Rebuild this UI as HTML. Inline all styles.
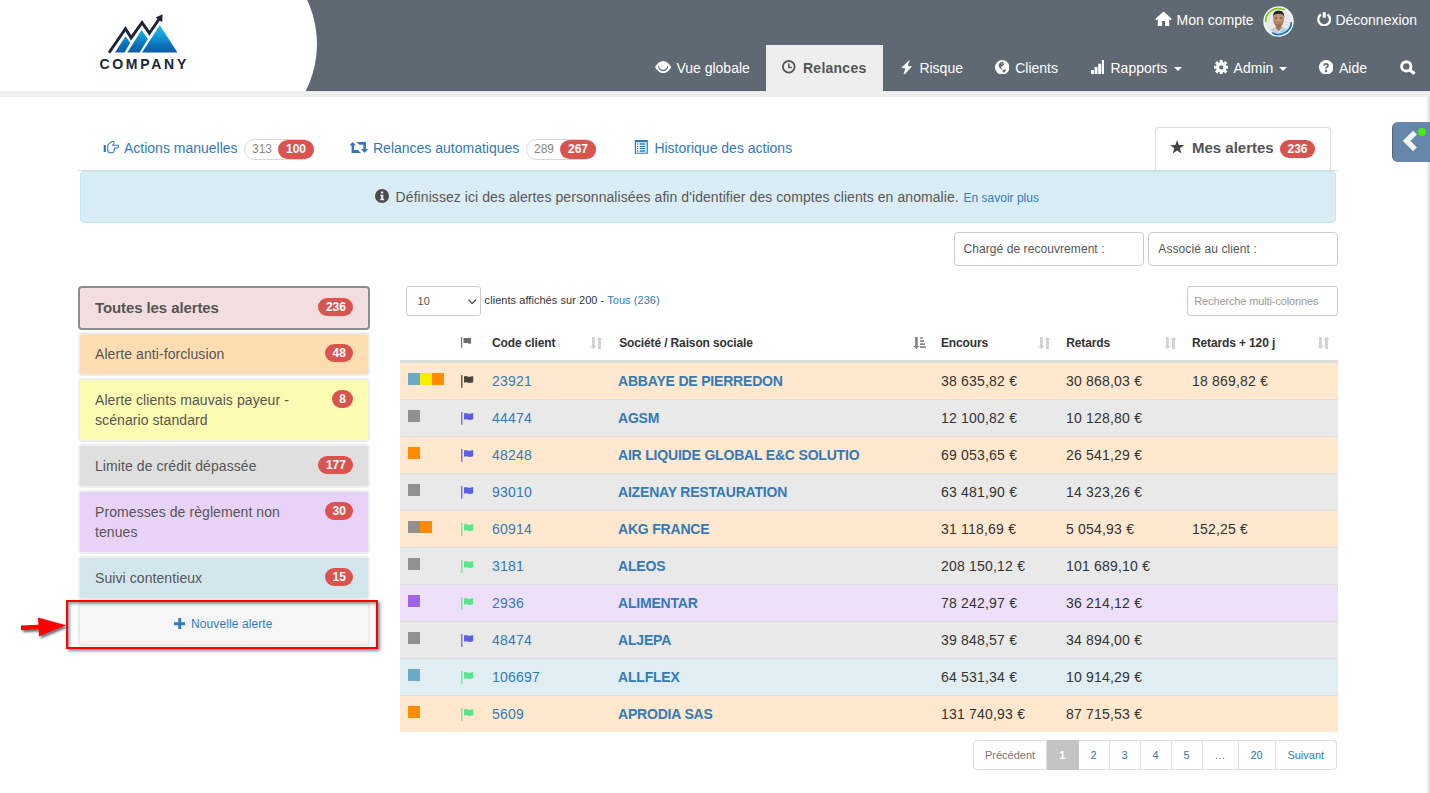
<!DOCTYPE html>
<html lang="fr">
<head>
<meta charset="utf-8">
<title>Relances - Mes alertes</title>
<style>
*{box-sizing:border-box;margin:0;padding:0}
html,body{width:1430px;height:793px;overflow:hidden;background:#fff}
body{font-family:"Liberation Sans",sans-serif;font-size:14px;line-height:20px;color:#333;position:relative}
a{color:#337ab7;text-decoration:none}
.abs{position:absolute}
svg{display:block}
/* ---------- header ---------- */
#hdr{position:absolute;left:0;top:0;width:1430px;height:91px;background:#5f6973;overflow:hidden}
#hdr .logo-bg{position:absolute;left:-100px;top:-59.5px;width:416.7px;height:206.8px;background:#fff;border-radius:0 103.4px 103.4px 0}
#stripe{position:absolute;left:0;top:91px;width:1430px;height:6px;background:#eee}
#edge{position:absolute;left:1426px;top:97px;width:4px;height:696px;background:linear-gradient(to right,rgba(255,255,255,0),#e9e9e9 60%,#dcdcdc)}
.top{position:absolute;top:10px;height:20px;line-height:20px;color:#fff;font-size:14px;white-space:nowrap}
.nav{position:absolute;top:58px;height:20px;line-height:20px;color:#fff;font-size:14px;white-space:nowrap}
.ico{position:absolute}
#tab-act{position:absolute;left:766px;top:45px;width:117px;height:46px;background:#eee}
#tab-act span{position:absolute;left:37px;top:13px;font-weight:bold;color:#555;font-size:14px;letter-spacing:.25px}
.caret{position:absolute;width:0;height:0;border-left:4px solid transparent;border-right:4px solid transparent;border-top:4px solid #fff}

/* ---------- tabs ---------- */
.tab{position:absolute;top:138px;height:20px;line-height:20px;font-size:14px;color:#337ab7;white-space:nowrap}
.pill{position:absolute;top:139px;height:21px;border:1px solid #d8d8d8;border-radius:10.5px;background:#fff;font-size:12px;line-height:19px;color:#888;white-space:nowrap}
.pill .n{position:absolute;left:7px;top:0}
.badge{display:block;position:absolute;height:18px;line-height:18px;padding:0 7.5px;border-radius:9px;background:#d9534f;color:#fff;font-size:12px;font-weight:bold;white-space:nowrap;text-align:center}
#tabline{position:absolute;left:78px;top:170px;width:1260px;height:1px;background:#ddd}
#tab-mes{position:absolute;left:1155px;top:127px;width:176px;height:43px;border:1px solid #ddd;border-bottom:0;border-radius:4px 4px 0 0;background:#fff}
#tab-mes .t{position:absolute;left:36px;top:10px;font-size:15px;font-weight:bold;color:#555;white-space:nowrap}
#info{position:absolute;left:80px;top:171px;width:1256px;height:52px;background:#d9edf7;border:1px solid #bce8f1;border-radius:4px}
#info .t{position:absolute;left:314.6px;top:15px;font-size:14px;color:#5a5754;letter-spacing:.07px;white-space:nowrap}
#info .l{position:absolute;left:882.6px;top:16px;font-size:12px;color:#337ab7;white-space:nowrap}
.filt{position:absolute;top:232px;height:34px;width:190px;border:1px solid #ccc;border-radius:4px;background:#fff;font-size:12px;color:#555;line-height:32px;padding-left:8.2px;white-space:nowrap}

/* ---------- alert list ---------- */
.li{position:absolute;left:78px;width:292px;border:2px solid #eee;border-radius:4px;padding:10px 15px;font-size:14px;line-height:20px;color:#555}
.li .badge{right:14.6px;top:10px}
.li.act{border-color:#8e8e8e;font-size:15px;font-weight:bold;color:#555}
.li .tx{display:block;width:215px;letter-spacing:.08px}
.li.act .tx{letter-spacing:-.1px}
#newbtn{position:absolute;left:78px;top:602px;width:292px;height:44px;border:2px solid #e9e9e9;border-radius:4px;background:#f6f6f6}
#newbtn span{position:absolute;left:111px;top:10px;letter-spacing:.1px;font-size:12px;color:#337ab7;white-space:nowrap;line-height:20px}
#redbox{position:absolute;left:66px;top:600px;width:312.2px;height:49px;border:2px solid #fe0000;box-shadow:2px 2px 3px rgba(60,80,90,.65), inset 2px 2px 3px rgba(60,80,90,.55)}

/* ---------- table ---------- */
#sel{position:absolute;left:406px;top:286px;width:75px;height:30px;border:1px solid #ccc;border-radius:3px;background:#fff;font-size:11px;color:#555}
#sel span{position:absolute;left:10.6px;top:4px;line-height:20px}
#len{position:absolute;left:484.6px;top:290px;font-size:11px;letter-spacing:.05px;line-height:20px;color:#333;white-space:nowrap}
#srch{position:absolute;left:1187px;top:286px;width:151px;letter-spacing:-.12px;height:30px;border:1px solid #ccc;border-radius:3px;background:#fff;font-size:11px;color:#999;line-height:28px;padding-left:6.2px;white-space:nowrap}
.th{position:absolute;top:333px;letter-spacing:-.13px;line-height:20px;font-size:12px;font-weight:bold;color:#333;white-space:nowrap}
#thb{position:absolute;left:400px;top:360px;width:938px;height:3px;background:#ddd}
.tr{position:absolute;left:400px;width:938px;height:37px;border-top:1px solid #ddd;font-size:14px;line-height:20px;color:#333}
.tr>*{position:absolute;top:8px;white-space:nowrap}
.tr .sq{top:10px;left:8px;height:12px;display:flex}
.tr .sq i{display:block;width:12px;height:12px}
.tr .fl{left:60.8px;top:12px}
.tr .cd{left:92px;color:#337ab7;letter-spacing:.2px}
.tr .nm{left:218px;color:#337ab7;font-weight:bold;letter-spacing:-.19px}
.tr .c5{left:541px}.tr .c6{left:666px}.tr .c7{left:792px}
.tr .c5,.tr .c6,.tr .c7{letter-spacing:.2px}
.or{background:#ffe8cd}.gr{background:#e9e9e9}.pu{background:#efe0fa}.bl{background:#e0eef4}
.pg{position:absolute;top:740px;height:30px;border:1px solid #ddd;border-left:0;background:#fff;font-size:11px;line-height:28px;text-align:center;color:#337ab7}
</style>
</head>
<body>
<!-- HEADER -->
<div id="hdr">
  <div style="position:absolute;left:0;top:90px;width:1430px;height:1px;background:#56616d"></div>
  <div class="logo-bg"></div>
</div>

<!-- LOGO -->
<svg class="abs" style="left:90px;top:5px" width="110" height="75" viewBox="90 5 110 75">
  <defs>
    <linearGradient id="mg" x1="0" y1="25" x2="0" y2="53" gradientUnits="userSpaceOnUse">
      <stop offset="0" stop-color="#25b7ea"/><stop offset=".35" stop-color="#11a0dc"/><stop offset=".7" stop-color="#0a72bd"/><stop offset="1" stop-color="#0a5aa6"/>
    </linearGradient>
  </defs>
  <polygon points="115,52.6 125.5,36.2 130.2,42.8 124.6,52.6" fill="url(#mg)"/>
  <polygon points="127.4,52.6 141.5,30.1 147.9,39 139.7,52.6" fill="url(#mg)"/>
  <polygon points="142,52.6 159.8,25.3 177.5,52.6" fill="url(#mg)"/>
  <polyline points="109,52.8 125.5,28.6 131.1,37.9 142,22.6 149.4,33.2 159.5,18.5" fill="none" stroke="#1b2537" stroke-width="2.9" stroke-linejoin="miter"/>
  <polygon points="162.6,14.2 162.2,22.3 155.6,17.4" fill="#1b2537"/>
  <text x="99.4" y="69" font-family="Liberation Sans, sans-serif" font-weight="bold" font-size="14" letter-spacing="2.72" fill="#1b2537">COMPANY</text>
</svg>

<!-- TOP LINKS -->
<svg class="abs" style="left:1155px;top:11px" width="17" height="16" viewBox="1155 11 17 16"><path d="M1163.6 11.6 L1171.4 18.6 L1171.4 19.7 L1170.4 20.2 L1169.2 19.2 L1169.2 26 L1165 26 L1165 21 L1162.1 21 L1162.1 26 L1157.8 26 L1157.8 19.2 L1156.6 20.2 L1155.7 19.7 L1155.7 18.6 Z" fill="#fff"/></svg>
<div class="top" style="left:1176.6px">Mon compte</div>
<svg class="abs" style="left:1262.5px;top:5.5px" width="31" height="31" viewBox="0 0 31 31">
  <defs><clipPath id="avc"><circle cx="15.5" cy="15.5" r="11.6"/></clipPath>
  <radialGradient id="skin" cx=".5" cy=".42" r=".6"><stop offset="0" stop-color="#cfa07c"/><stop offset=".7" stop-color="#b98662"/><stop offset="1" stop-color="#8f6347"/></radialGradient></defs>
  <circle cx="15.5" cy="15.5" r="15.2" fill="#fff"/>
  <circle cx="15.5" cy="15.5" r="13.7" fill="#e8e8e8"/>
  <g clip-path="url(#avc)">
    <path d="M6 31 L6.6 24.6 Q7.6 22.6 11.6 21.6 L19.6 21.6 Q23.6 22.6 24.6 24.6 L25.2 31 Z" fill="#b7cce0"/>
    <path d="M12.9 17 L12.7 22.2 L15.6 25.4 L18.5 22.2 L18.3 17 Z" fill="#a97858"/>
    <path d="M12.7 22.2 L15.6 25.4 L18.5 22.2 L19.8 21.8 L15.6 27.4 L11.4 21.8Z" fill="#dbe6f1"/>
    <ellipse cx="15.6" cy="12.9" rx="5.35" ry="7.4" fill="url(#skin)"/>
    <path d="M9.9 12.4 Q9.3 4.6 15.7 4.4 Q21.9 4.6 21.3 12.4 Q20.9 8.8 18.9 8.2 Q15.6 7.2 12.3 8.2 Q10.3 8.8 9.9 12.4 Z" fill="#24262d"/>
    <path d="M11 16.4 Q15.6 22.4 20.2 16.4 Q19.6 20.4 15.6 20.6 Q11.6 20.4 11 16.4Z" fill="#7d5a45" opacity=".45"/>
    <rect x="12" y="11.6" width="2.6" height="1" rx=".4" fill="#3e2e26" opacity=".75"/><rect x="16.6" y="11.6" width="2.6" height="1" rx=".4" fill="#3e2e26" opacity=".75"/>
    <rect x="14.2" y="16.6" width="2.8" height=".7" rx=".3" fill="#7a4a3c" opacity=".6"/>
  </g>
  <path d="M2.6 15.9 A12.9 12.9 0 0 1 21.4 4" fill="none" stroke="#86c320" stroke-width="1.7"/>
  <path d="M28.4 16.1 A12.9 12.9 0 0 1 9.2 26.8" fill="none" stroke="#0f76c2" stroke-width="1.7"/>
</svg>
<svg class="abs" style="left:1316.8px;top:12px" width="14.4" height="14.4" viewBox="0 0 14.4 14.4"><path d="M3.9 2.5 A5.9 5.9 0 1 0 10.5 2.5" fill="none" stroke="#fff" stroke-width="2.3"/><rect x="5.7" y=".2" width="3.1" height="5.5" fill="#fff"/></svg>
<div class="top" style="left:1335.4px">Déconnexion</div>

<!-- NAV -->
<svg class="abs" style="left:655px;top:61px" width="16.2" height="12.2" viewBox="0 0 16.2 12.2"><path d="M0 6.1 Q3.7 0 8.1 0 Q12.5 0 16.2 6.1 Q12.5 12.2 8.1 12.2 Q3.7 12.2 0 6.1Z" fill="#fff"/><path d="M3 5.2 A5.1 5.1 0 0 0 13.2 5.2 Z" fill="#5f6973"/><circle cx="8.1" cy="4.7" r="4" fill="#fff"/><path d="M6.4 4.6 Q6.6 6.2 8.2 6.3 Q6.9 5.8 6.9 4.4Z" fill="#5f6973"/></svg>
<div class="nav" style="left:676.4px">Vue globale</div>
<div id="tab-act"><svg class="abs" style="left:16.2px;top:15px" width="13.6" height="13.6" viewBox="0 0 13.6 13.6"><circle cx="6.8" cy="6.8" r="5.85" fill="none" stroke="#555" stroke-width="1.9"/><path d="M6.8 3.4 V7.4 H9.8" fill="none" stroke="#555" stroke-width="1.5"/></svg><span>Relances</span></div>
<svg class="abs" style="left:900.5px;top:59.8px" width="11" height="14.4" viewBox="0 -.2 11 14.4"><polygon points="8.5,-.1 .3,7.5 4.4,8.2 2.4,14 3.8,14.1 10.8,6.3 6.7,5.6 8.8,-.1" fill="#fff"/></svg>
<div class="nav" style="left:919.4px">Risque</div>
<svg class="abs" style="left:994.8px;top:59.7px" width="14.4" height="14.6" viewBox="0 0 14.4 14.6"><circle cx="7.2" cy="7.3" r="7.2" fill="#fff"/><path d="M5.4 2.6 L8 1.6 L8.6 2.4 L7.6 3.2 L9.3 3.5 L8.8 5 L7.5 5.6 L7.2 6.9 L5.9 7.3 L6.6 8.4 L7.6 9.3 L6.6 9.5 L4.7 8.1 L3.6 6 L3.9 4 Z M7.8 9.7 L10.5 9.4 L11 10.5 L9.7 12 L8.6 12.8 L7.6 11.4 Z" fill="#5f6973"/><path d="M6 3.4 L7.4 3.6 L6.8 4.4 Z M6 6.2 L7 6 L6.6 6.9Z" fill="#fff"/></svg>
<div class="nav" style="left:1015.2px">Clients</div>
<svg class="abs" style="left:1090.6px;top:60px" width="13.8" height="14" viewBox="0 0 13.8 14"><path d="M0 9.9 h2.9 V14 H0Z M3.6 7 h2.9 V14 H3.6Z M7.2 3.8 h2.9 V14 H7.2Z M10.8 0 h2.9 V14 h-2.9Z" fill="#fff"/></svg>
<div class="nav" style="left:1110.5px">Rapports</div>
<div class="caret" style="left:1174.3px;top:67.3px"></div>
<svg class="abs" style="left:1213.8px;top:59.7px" width="14.4" height="14.6" viewBox="0 0 14.4 14.6"><g fill="#fff"><rect x="5.75" y="0" width="2.9" height="4" transform="rotate(0 7.2 7.3)"/><rect x="5.75" y="0" width="2.9" height="4" transform="rotate(45 7.2 7.3)"/><rect x="5.75" y="0" width="2.9" height="4" transform="rotate(90 7.2 7.3)"/><rect x="5.75" y="0" width="2.9" height="4" transform="rotate(135 7.2 7.3)"/><rect x="5.75" y="0" width="2.9" height="4" transform="rotate(180 7.2 7.3)"/><rect x="5.75" y="0" width="2.9" height="4" transform="rotate(225 7.2 7.3)"/><rect x="5.75" y="0" width="2.9" height="4" transform="rotate(270 7.2 7.3)"/><rect x="5.75" y="0" width="2.9" height="4" transform="rotate(315 7.2 7.3)"/><circle cx="7.2" cy="7.3" r="5.3"/></g><rect x="5.3" y="5.4" width="3.8" height="3.8" rx=".9" fill="#5f6973"/></svg>
<div class="nav" style="left:1233.6px">Admin</div>
<div class="caret" style="left:1278.8px;top:67.3px"></div>
<svg class="abs" style="left:1318.8px;top:59.7px" width="14.4" height="14.6" viewBox="0 0 14.4 14.6"><circle cx="7.2" cy="7.3" r="7.2" fill="#fff"/><path d="M5.1 5.7 Q5.2 3.9 7.1 3.9 Q9 3.9 9 5.6 Q9 6.5 7.9 7.2 Q7.1 7.7 7.1 8.4" fill="none" stroke="#5f6973" stroke-width="1.75"/><rect x="6.1" y="9.6" width="2" height="2.6" fill="#5f6973"/></svg>
<div class="nav" style="left:1339px">Aide</div>
<svg class="abs" style="left:1399.6px;top:59.5px" width="16" height="15" viewBox="0 0 16 15"><circle cx="6.3" cy="6.4" r="4.65" fill="none" stroke="#fff" stroke-width="2.9"/><path d="M9.6 9.7 L14.6 13.7" stroke="#fff" stroke-width="3.1"/></svg>
<div id="stripe"></div>
<div id="edge"></div>

<!-- TABS -->
<svg class="abs" style="left:103px;top:140px" width="17" height="14" viewBox="103 140 17 14"><rect x="103.7" y="145" width="2.2" height="7" fill="#2e77ba"/><path d="M107.7 146.2 Q107.7 144.2 109.5 143.1 L112.2 141.5 Q113.8 140.9 114.2 142.4 Q114.3 143.7 112.5 145.3 L117.5 145.3 Q118.6 145.4 118.6 146.6 Q118.6 147.8 117.5 147.9 L114.8 147.9 L113.6 152.2 Q113.3 152.8 112.4 152.8 L110.2 152.8 Q107.7 152.4 107.7 150 Z" fill="none" stroke="#2e77ba" stroke-width="1.05" stroke-linejoin="round"/></svg>
<div class="tab" style="left:124px">Actions manuelles</div>
<div class="pill" style="left:244px;width:70px"><span class="n">313</span><span class="badge" style="left:33px;top:0;width:36px;padding:0;height:19px;line-height:19px;border-radius:9.5px">100</span></div>
<svg class="abs" style="left:349px;top:141px" width="20" height="13" viewBox="349 141 20 13"><path d="M352.7 142 L356.1 145.6 L354.1 145.6 L354.1 150.1 L358 150.1 L360.9 152.9 L351.6 152.9 L351.6 145.6 L349.3 145.6 Z M364.6 152.9 L361 149 L363.4 149 L363.4 144.7 L359.3 144.7 L356.5 142 L365.9 142 L365.9 149 L368.1 149 Z" fill="#2e77ba"/></svg>
<div class="tab" style="left:373px">Relances automatiques</div>
<div class="pill" style="left:526px;width:70px"><span class="n">289</span><span class="badge" style="left:33px;top:0;width:36px;padding:0;height:19px;line-height:19px;border-radius:9.5px">267</span></div>
<svg class="abs" style="left:634px;top:140px" width="14" height="14" viewBox="634 140 14 14"><path d="M634.8 140.1 H647.8 V153.8 H634.8Z M636 142.2 V152.7 H646.6 V142.2Z" fill="#2e77ba" fill-rule="evenodd"/><path d="M637 143.3 h1.2 v1.5 h-1.2Z M639.6 143.3 h5.6 v1.5 h-5.6Z M637 146 h1.2 v1 h-1.2Z M639.6 146 h5.6 v1 h-5.6Z M637 148 h1.2 v1 h-1.2Z M639.6 148 h5.6 v1 h-5.6Z M637 150.2 h1.2 v1.5 h-1.2Z M639.6 150.2 h5.6 v1.5 h-5.6Z" fill="#2e77ba"/></svg>
<div class="tab" style="left:654.4px">Historique des actions</div>
<div id="tabline"></div>
<div id="tab-mes">
  <svg class="abs" style="left:13.9px;top:12px" width="14.2" height="13.6" viewBox="0 0 13.6 13"><polygon points="6.8,0 8.5,4.8 13.6,4.9 9.5,8 11,12.9 6.8,10 2.6,12.9 4.1,8 0,4.9 5.1,4.8" fill="#444"/></svg>
  <span class="t">Mes alertes</span>
  <span class="badge" style="left:124px;top:12px">236</span>
</div>
<!-- INFO -->
<div id="info">
  <svg class="abs" style="left:293.6px;top:17px" width="14" height="14" viewBox="0 0 14 14"><circle cx="7" cy="7" r="7" fill="#4a4a4a"/><path d="M5.9 2.6 H8.2 V4.6 H5.9Z M5.2 5.8 H8.3 V9.8 H9.2 V11.2 H5.2 V9.8 H6.1 V7.2 H5.2Z" fill="#d9edf7"/></svg>
  <span class="t">Définissez ici des alertes personnalisées afin d'identifier des comptes clients en anomalie.</span>
  <span class="l">En savoir plus</span>
</div>
<!-- FILTERS -->
<div class="filt" style="left:954px;letter-spacing:.07px;padding-left:8.5px">Chargé de recouvrement :</div>
<div class="filt" style="left:1148px;letter-spacing:.1px;padding-left:9.3px">Associé au client :</div>
<!-- SIDE WIDGET -->
<div class="abs" style="left:1392px;top:122px;width:38px;height:40px;background:#6687a9;border-radius:6px 0 0 6px;border-left:1px solid #56657a"></div>
<svg class="abs" style="left:1400px;top:128px" width="20" height="26" viewBox="1400 128 20 26"><polygon points="1402.7,140.8 1413.1,130.8 1416.9,134.5 1410.5,140.8 1416.9,147.4 1413.1,151.2" fill="#f3f3f3"/></svg>
<div class="abs" style="left:1417.9px;top:127.8px;width:8.2px;height:8.2px;border-radius:50%;background:#48ec10"></div>

<!-- ALERT LIST -->
<div class="li act" style="top:286px;background:#f2dede"><span class="tx">Toutes les alertes</span><span class="badge">236</span></div>
<div class="li " style="top:332px;background:#ffddb3"><span class="tx">Alerte anti-forclusion</span><span class="badge">48</span></div>
<div class="li " style="top:378px;background:#fdfab1"><span class="tx">Alerte clients mauvais payeur - scénario standard</span><span class="badge">8</span></div>
<div class="li " style="top:444px;background:#dfdfdf"><span class="tx">Limite de crédit dépassée</span><span class="badge">177</span></div>
<div class="li " style="top:490px;background:#e8d2f8"><span class="tx">Promesses de règlement non tenues</span><span class="badge">30</span></div>
<div class="li " style="top:556px;background:#d3e6ee"><span class="tx">Suivi contentieux</span><span class="badge">15</span></div>
<div id="newbtn"><svg class="abs" style="left:94px;top:13.8px" width="11.4" height="11.4" viewBox="0 0 11 11"><path d="M4.1 0 H6.9 V4.1 H11 V6.9 H6.9 V11 H4.1 V6.9 H0 V4.1 H4.1Z" fill="#337ab7"/></svg><span>Nouvelle alerte</span></div>
<div id="redbox"></div>
<svg class="abs" style="left:14px;top:608px;overflow:visible" width="60" height="40" viewBox="14 608 60 40">
  <defs><filter id="sh" x="-20%" y="-20%" width="150%" height="160%"><feGaussianBlur in="SourceAlpha" stdDeviation="1.3"/><feOffset dx="2" dy="2.4" result="o"/><feComponentTransfer><feFuncA type="linear" slope=".6"/></feComponentTransfer><feFlood flood-color="#3a5060"/><feComposite in2="o" operator="in" result="s"/><feComponentTransfer in="s"><feFuncA type="linear" slope=".8"/></feComponentTransfer><feMerge><feMergeNode/><feMergeNode in="SourceGraphic"/></feMerge></filter></defs>
  <polygon points="20.8,625.6 38.4,624.7 38,617.4 66.2,625.3 38.9,636.6 38.6,629.6 21,630.3" fill="#fe0000" filter="url(#sh)"/>
</svg>

<!-- TABLE CONTROLS -->
<div id="sel"><span>10</span><svg class="abs" style="left:61px;top:11.6px" width="8.4" height="5.6" viewBox="0 0 8.4 5.6"><path d="M.5 .6 L4.2 4.6 L7.9 .6" fill="none" stroke="#444" stroke-width="1.25"/></svg></div>
<div id="len">clients affichés sur 200 - <a>Tous (236)</a></div>
<div id="srch">Recherche multi-colonnes</div>
<!-- TABLE HEAD -->
<svg class="abs" style="left:460.8px;top:337px" width="11" height="11" viewBox="0 0 11 11"><rect x="0" y="0" width="1.2" height="10.9" fill="#777"/><path d="M2.5 1 H10.1 V6.2 Q8.4 7.4 6.2 6 H2.5Z" fill="#6e6e6e"/></svg>
<div class="th" style="left:492px">Code client</div>
<svg class="abs" style="left:590px;top:337px" width="13" height="12" viewBox="0 0 13 12"><path d="M2 0 H4.8 V9 H6.8 L3.4 12 L0 9 H2Z M9.5 0 L13 2.8 H11 V12 H8 V2.8 H6.1Z" fill="#d2d2d2"/></svg>
<div class="th" style="left:619.2px">Société / Raison sociale</div>
<svg class="abs" style="left:913px;top:337px" width="13" height="12" viewBox="0 0 13 12"><path d="M2 0 H4.8 V9 H6.8 L3.4 12 L0 9 H2Z M7 .2 h3 v1.6 h-3Z M7 3.3 h4 v1.6 h-4Z M7 6.3 h4.9 v1.6 h-4.9Z M7 9.2 h5.9 v1.7 h-5.9Z" fill="#888"/></svg>
<div class="th" style="left:941px">Encours</div>
<svg class="abs" style="left:1038px;top:337px" width="13" height="12" viewBox="0 0 13 12"><path d="M2 0 H4.8 V9 H6.8 L3.4 12 L0 9 H2Z M9.5 0 L13 2.8 H11 V12 H8 V2.8 H6.1Z" fill="#d2d2d2"/></svg>
<div class="th" style="left:1066.2px">Retards</div>
<svg class="abs" style="left:1163.6px;top:337px" width="13" height="12" viewBox="0 0 13 12"><path d="M2 0 H4.8 V9 H6.8 L3.4 12 L0 9 H2Z M9.5 0 L13 2.8 H11 V12 H8 V2.8 H6.1Z" fill="#d2d2d2"/></svg>
<div class="th" style="left:1192px">Retards + 120 j</div>
<svg class="abs" style="left:1316.8px;top:337px" width="13" height="12" viewBox="0 0 13 12"><path d="M2 0 H4.8 V9 H6.8 L3.4 12 L0 9 H2Z M9.5 0 L13 2.8 H11 V12 H8 V2.8 H6.1Z" fill="#d2d2d2"/></svg>
<div id="thb"></div>
<!-- TABLE BODY -->
<div class="tr or" style="top:362px"><span class="sq"><i style="background:#6aaac2"></i><i style="background:#f8ec00"></i><i style="background:#ff8c00"></i></span><svg class="fl" width="13" height="13" viewBox="0 0 13 13"><rect x="0" y="0" width="1.5" height="12.8" fill="#7a5a44"/><path d="M3 1.6 Q4.6 .7 6.6 1.5 Q8.8 2.4 12.2 1.1 V7.2 Q9 8.5 6.6 7.6 Q4.6 6.8 3 7.7 Z" fill="#4a4238"/></svg><a class="cd">23921</a><a class="nm">ABBAYE DE PIERREDON</a><span class="c5">38 635,82 €</span><span class="c6">30 868,03 €</span><span class="c7">18 869,82 €</span></div>
<div class="tr gr" style="top:399px"><span class="sq"><i style="background:#909090"></i></span><svg class="fl" width="13" height="13" viewBox="0 0 13 13"><rect x="0" y="0" width="1.5" height="12.8" fill="#8a6fe0"/><path d="M3 1.6 Q4.6 .7 6.6 1.5 Q8.8 2.4 12.2 1.1 V7.2 Q9 8.5 6.6 7.6 Q4.6 6.8 3 7.7 Z" fill="#5b5fe2"/></svg><a class="cd">44474</a><a class="nm">AGSM</a><span class="c5">12 100,82 €</span><span class="c6">10 128,80 €</span><span class="c7"></span></div>
<div class="tr or" style="top:436px"><span class="sq"><i style="background:#ff8c00"></i></span><svg class="fl" width="13" height="13" viewBox="0 0 13 13"><rect x="0" y="0" width="1.5" height="12.8" fill="#8a6fe0"/><path d="M3 1.6 Q4.6 .7 6.6 1.5 Q8.8 2.4 12.2 1.1 V7.2 Q9 8.5 6.6 7.6 Q4.6 6.8 3 7.7 Z" fill="#5b5fe2"/></svg><a class="cd">48248</a><a class="nm">AIR LIQUIDE GLOBAL E&amp;C SOLUTIO</a><span class="c5">69 053,65 €</span><span class="c6">26 541,29 €</span><span class="c7"></span></div>
<div class="tr gr" style="top:473px"><span class="sq"><i style="background:#909090"></i></span><svg class="fl" width="13" height="13" viewBox="0 0 13 13"><rect x="0" y="0" width="1.5" height="12.8" fill="#8a6fe0"/><path d="M3 1.6 Q4.6 .7 6.6 1.5 Q8.8 2.4 12.2 1.1 V7.2 Q9 8.5 6.6 7.6 Q4.6 6.8 3 7.7 Z" fill="#5b5fe2"/></svg><a class="cd">93010</a><a class="nm">AIZENAY RESTAURATION</a><span class="c5">63 481,90 €</span><span class="c6">14 323,26 €</span><span class="c7"></span></div>
<div class="tr or" style="top:510px"><span class="sq"><i style="background:#909090"></i><i style="background:#ff8c00"></i></span><svg class="fl" width="13" height="13" viewBox="0 0 13 13"><rect x="0" y="0" width="1.5" height="12.8" fill="#7fe0a0"/><path d="M3 1.6 Q4.6 .7 6.6 1.5 Q8.8 2.4 12.2 1.1 V7.2 Q9 8.5 6.6 7.6 Q4.6 6.8 3 7.7 Z" fill="#58e68a"/></svg><a class="cd">60914</a><a class="nm">AKG FRANCE</a><span class="c5">31 118,69 €</span><span class="c6">5 054,93 €</span><span class="c7">152,25 €</span></div>
<div class="tr gr" style="top:547px"><span class="sq"><i style="background:#909090"></i></span><svg class="fl" width="13" height="13" viewBox="0 0 13 13"><rect x="0" y="0" width="1.5" height="12.8" fill="#7fe0a0"/><path d="M3 1.6 Q4.6 .7 6.6 1.5 Q8.8 2.4 12.2 1.1 V7.2 Q9 8.5 6.6 7.6 Q4.6 6.8 3 7.7 Z" fill="#58e68a"/></svg><a class="cd">3181</a><a class="nm">ALEOS</a><span class="c5">208 150,12 €</span><span class="c6">101 689,10 €</span><span class="c7"></span></div>
<div class="tr pu" style="top:584px"><span class="sq"><i style="background:#a064e8"></i></span><svg class="fl" width="13" height="13" viewBox="0 0 13 13"><rect x="0" y="0" width="1.5" height="12.8" fill="#7fe0a0"/><path d="M3 1.6 Q4.6 .7 6.6 1.5 Q8.8 2.4 12.2 1.1 V7.2 Q9 8.5 6.6 7.6 Q4.6 6.8 3 7.7 Z" fill="#58e68a"/></svg><a class="cd">2936</a><a class="nm">ALIMENTAR</a><span class="c5">78 242,97 €</span><span class="c6">36 214,12 €</span><span class="c7"></span></div>
<div class="tr gr" style="top:621px"><span class="sq"><i style="background:#909090"></i></span><svg class="fl" width="13" height="13" viewBox="0 0 13 13"><rect x="0" y="0" width="1.5" height="12.8" fill="#8a6fe0"/><path d="M3 1.6 Q4.6 .7 6.6 1.5 Q8.8 2.4 12.2 1.1 V7.2 Q9 8.5 6.6 7.6 Q4.6 6.8 3 7.7 Z" fill="#5b5fe2"/></svg><a class="cd">48474</a><a class="nm">ALJEPA</a><span class="c5">39 848,57 €</span><span class="c6">34 894,00 €</span><span class="c7"></span></div>
<div class="tr bl" style="top:658px"><span class="sq"><i style="background:#6aaac2"></i></span><svg class="fl" width="13" height="13" viewBox="0 0 13 13"><rect x="0" y="0" width="1.5" height="12.8" fill="#7fe0a0"/><path d="M3 1.6 Q4.6 .7 6.6 1.5 Q8.8 2.4 12.2 1.1 V7.2 Q9 8.5 6.6 7.6 Q4.6 6.8 3 7.7 Z" fill="#58e68a"/></svg><a class="cd">106697</a><a class="nm">ALLFLEX</a><span class="c5">64 531,34 €</span><span class="c6">10 914,29 €</span><span class="c7"></span></div>
<div class="tr or" style="top:695px"><span class="sq"><i style="background:#ff8c00"></i></span><svg class="fl" width="13" height="13" viewBox="0 0 13 13"><rect x="0" y="0" width="1.5" height="12.8" fill="#7fe0a0"/><path d="M3 1.6 Q4.6 .7 6.6 1.5 Q8.8 2.4 12.2 1.1 V7.2 Q9 8.5 6.6 7.6 Q4.6 6.8 3 7.7 Z" fill="#58e68a"/></svg><a class="cd">5609</a><a class="nm">APRODIA SAS</a><span class="c5">131 740,93 €</span><span class="c6">87 715,53 €</span><span class="c7"></span></div>
<!-- PAGINATION -->
<div class="pg" style="left:973px;width:74px;color:#777;border-left:1px solid #ddd;border-radius:4px 0 0 4px">Précédent</div>
<div class="pg" style="left:1047px;width:31.5px;background:#c4c4c4;color:#fff;font-weight:bold;border-color:#c4c4c4">1</div>
<div class="pg" style="left:1078.5px;width:31.0px;">2</div>
<div class="pg" style="left:1109.5px;width:31.0px;">3</div>
<div class="pg" style="left:1140.5px;width:31.0px;">4</div>
<div class="pg" style="left:1171.5px;width:31.0px;">5</div>
<div class="pg" style="left:1202.5px;width:36.0px;color:#777">…</div>
<div class="pg" style="left:1238.5px;width:37.0px;">20</div>
<div class="pg" style="left:1275.5px;width:61.5px;border-radius:0 4px 4px 0">Suivant</div>
</body>
</html>
